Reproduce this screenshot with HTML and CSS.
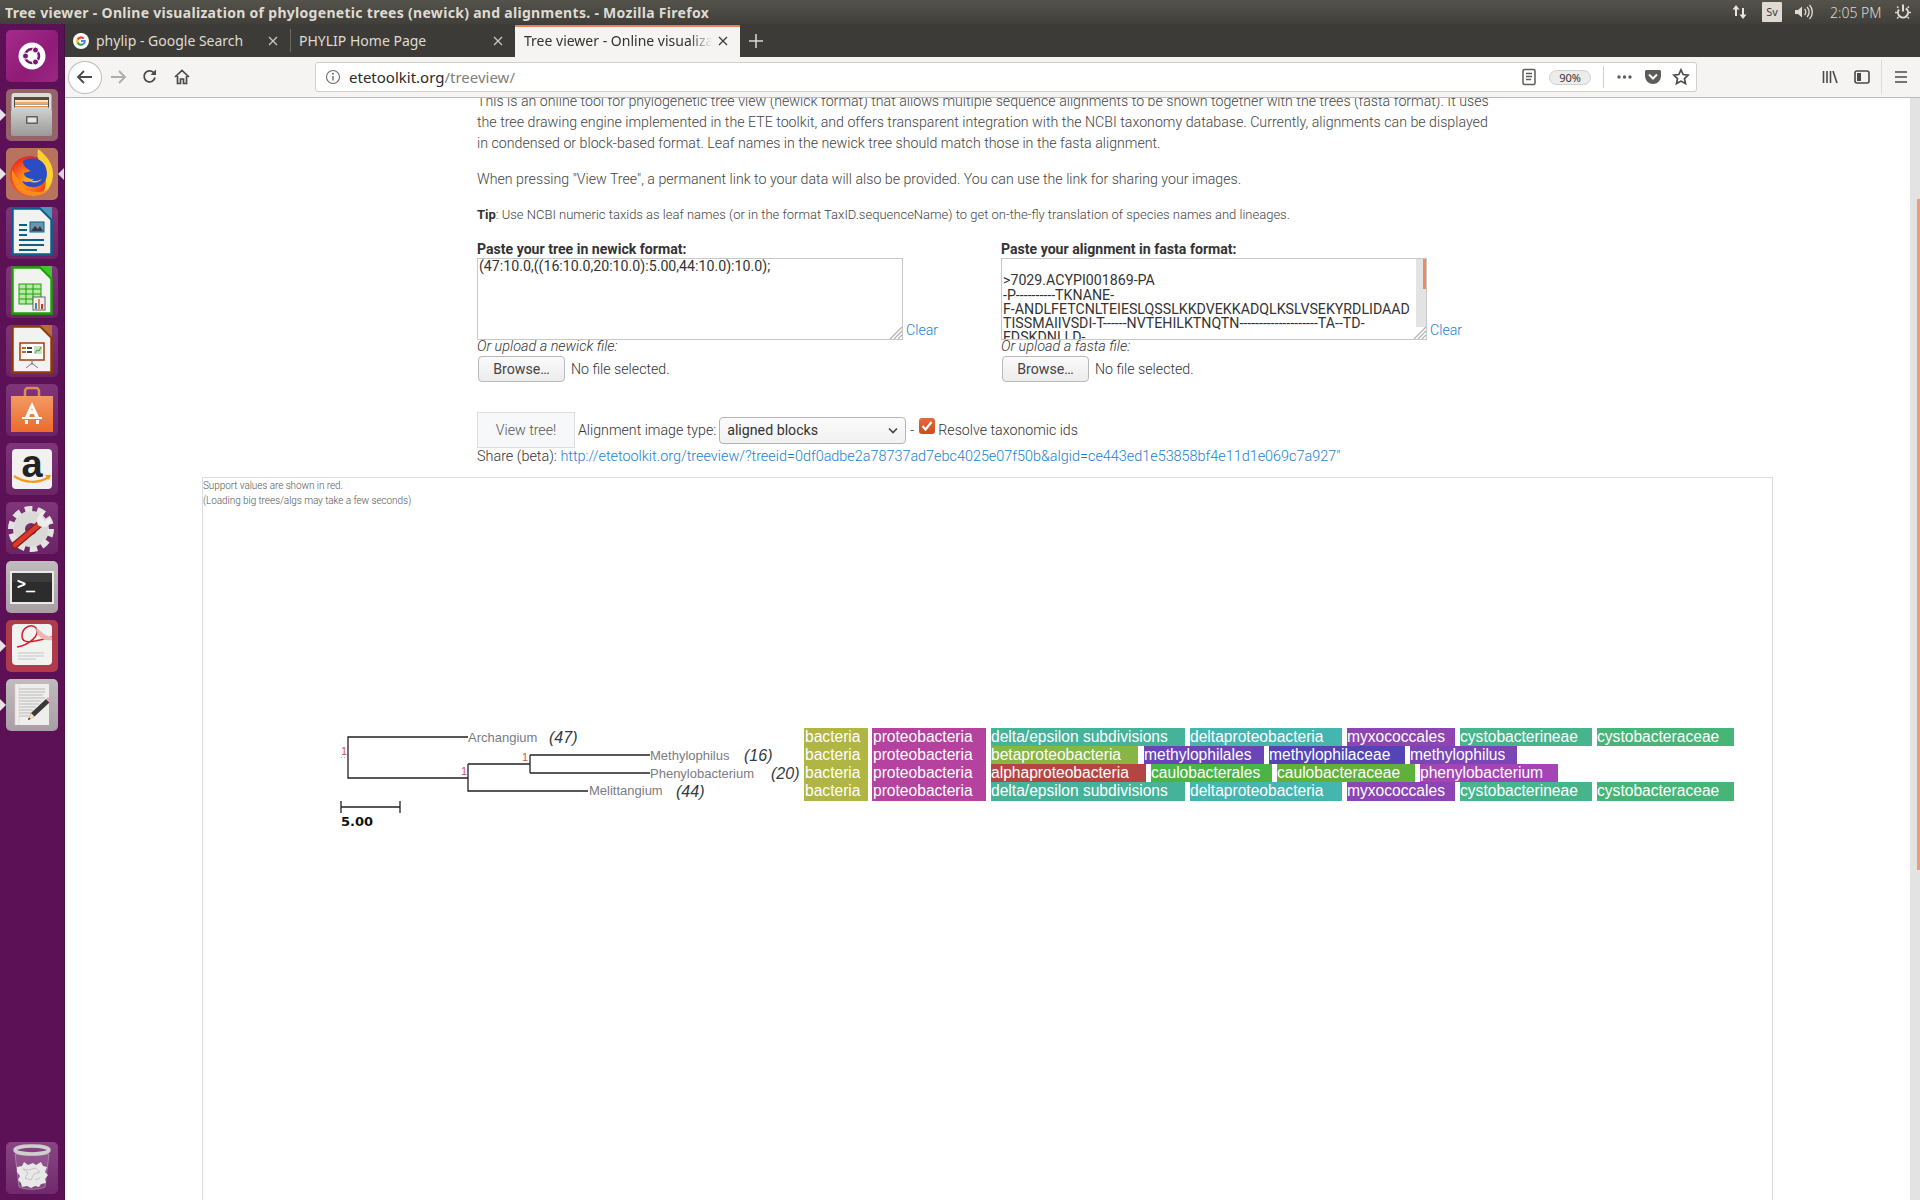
FILE: index.html
```html
<!DOCTYPE html>
<html lang="en">
<head>
<meta charset="utf-8">
<title>Tree viewer</title>
<link rel="stylesheet" href="styles.css">
</head>
<body>
<header class="topbar">
  <div class="wintitle">Tree viewer - Online visualization of phylogenetic trees (newick) and alignments. - Mozilla Firefox</div>
  <div class="tray">
    <svg class="tray-net" width="18" height="18" viewBox="0 0 18 18"><path d="M5 2 1.500 6.500H4V13h2V6.500h2.500zM12 16l3.500-4.500H13V5h-2v6.500H8.500z" fill="#e8e5de"/></svg>
    <span class="tray-kb">Sv</span>
    <svg class="tray-vol" width="22" height="18" viewBox="0 0 22 18"><path d="M2 7v4h3l4 3.500v-11L5 7z" fill="#dfdbd2"/><path d="M11.500 6a4 4 0 0 1 0 6M14 4a7 7 0 0 1 0 10M16.500 2a10 10 0 0 1 0 14" fill="none" stroke="#dfdbd2" stroke-width="1.400"/></svg>
    <span class="tray-time">2:05 PM</span>
    <svg class="tray-power" width="18" height="18" viewBox="0 0 18 18"><circle cx="9" cy="9.500" r="5" fill="none" stroke="#dfdbd2" stroke-width="2" stroke-dasharray="23 8.500" transform="rotate(-55 9 9.500)"/><path d="M9 1.500v7" stroke="#dfdbd2" stroke-width="2"/><path d="M1 9.500h2M15 9.500h2M3 15.500l1.500-1.500M15 15.500L13.500 14M3 3.500l1.500 1.500M15 3.500L13.500 5" stroke="#dfdbd2" stroke-width="1.300"/></svg>
  </div>
</header>

<div class="desktop">
  <nav class="launcher">
    <div class="tile t-ubuntu">
      <svg viewBox="0 0 52 52"><circle cx="26" cy="26" r="13.500" fill="#fff"/><circle cx="26" cy="26" r="7" fill="none" stroke="#7b1a6a" stroke-width="2.600"/><circle cx="19.500" cy="26" r="3" fill="#7b1a6a" stroke="#fff"/><circle cx="29.500" cy="20" r="3" fill="#7b1a6a" stroke="#fff"/><circle cx="29.500" cy="32" r="3" fill="#7b1a6a" stroke="#fff"/></svg>
    </div>
    <div class="tile t-files run">
      <svg viewBox="0 0 52 52"><defs><linearGradient id="cab" x1="0" y1="0" x2="0" y2="1"><stop offset="0" stop-color="#d2d2d0"/><stop offset="1" stop-color="#9a9a98"/></linearGradient></defs><rect x="5.500" y="4" width="40" height="40" rx="3" fill="#dcdbd9"/><rect x="8" y="8" width="35" height="14" fill="#4d4b48"/><rect x="9" y="11" width="33" height="2" fill="#fbe4c4"/><rect x="9" y="13" width="33" height="2" fill="#f0a860"/><rect x="9" y="15.500" width="33" height="1.500" fill="#fff"/><rect x="9" y="17" width="33" height="5" fill="#e88b3e"/><path d="M5 22l4-4h33l4 4v23a2 2 0 0 1-2 2H7a2 2 0 0 1-2-2z" fill="url(#cab)"/><rect x="20" y="27" width="12" height="8" rx="1" fill="#5f5f5d"/><rect x="21.500" y="28.500" width="9" height="5" fill="#e4e4e2"/></svg>
    </div>
    <div class="tile t-firefox run run-right">
      <svg viewBox="0 0 52 52"><defs><radialGradient id="ff" cx=".45" cy=".6" r=".6"><stop offset="0" stop-color="#ffb11f"/><stop offset=".6" stop-color="#f9591d"/><stop offset="1" stop-color="#e5251f"/></radialGradient></defs><circle cx="24" cy="28" r="20" fill="url(#ff)"/><path d="M32 1c8 6 15 14 15 25 0 9-4 16-10 20 3-7 4-16 1-23-3-7-8-11-6-22z" fill="#ffd02e"/><path d="M17 13c8-5 20-3 23 7 3 9-1 17-10 19-7 1-12-2-14-6 5 2 10 1 12-2-5 0-10-2-10-6 2-1 5-1 7-2-4-2-8-5-8-10z" fill="#2a4cc4"/><path d="M6 22c-1 10 3 20 12 24 9 4 20 2 26-6-8 6-20 5-26-1-5-5-8-11-12-17z" fill="#ff8a1c"/><path d="M22 32c5 2 11 1 14-1-3 4-9 5-14 1z" fill="#ffbe2e"/></svg>
    </div>
    <div class="tile t-purple">
      <svg viewBox="0 0 52 52"><path d="M6.500 1.500h28l11 11v35h-39z" fill="#f2f2f0" stroke="#0e5f88" stroke-width="2.500"/><path d="M34 0h12v12z" fill="#4f98bd"/><rect x="13" y="17" width="8" height="2" fill="#0e5f88"/><rect x="13" y="22" width="8" height="2" fill="#0e5f88"/><rect x="13" y="27" width="8" height="2" fill="#0e5f88"/><rect x="24" y="15" width="14" height="10" fill="#6a96b3" stroke="#0e5f88"/><path d="M25 24l4-5 3 3 2-3 3 5z" fill="#38393b"/><rect x="13" y="32" width="25" height="2" fill="#0e5f88"/><rect x="13" y="37" width="25" height="2" fill="#0e5f88"/><rect x="13" y="42" width="18" height="2" fill="#0e5f88"/></svg>
    </div>
    <div class="tile t-purple">
      <svg viewBox="0 0 52 52"><path d="M6.500 1.500h28l11 11v35h-39z" fill="#f2f2f0" stroke="#18a303" stroke-width="2.500"/><path d="M34 0h12v12z" fill="#43c330"/><rect x="13" y="18" width="22" height="20" fill="#b9e8a8" stroke="#18a303"/><path d="M13 23h22M13 28h22M13 33h22M20 18v20M27 18v20" stroke="#18a303"/><rect x="27" y="31" width="12" height="13" fill="#eee" stroke="#666"/><rect x="29" y="37" width="2" height="6" fill="#3c86c6"/><rect x="32" y="33" width="2" height="10" fill="#e88b3e"/><rect x="35" y="38" width="2" height="5" fill="#c33"/></svg>
    </div>
    <div class="tile t-purple">
      <svg viewBox="0 0 52 52"><path d="M6.500 1.500h28l11 11v35h-39z" fill="#f2f2f0" stroke="#8f3a0a" stroke-width="2.500"/><path d="M34 0h12v12z" fill="#b86a3c"/><rect x="14" y="18" width="24" height="17" fill="#fff" stroke="#a33e03" stroke-width="1.500"/><rect x="16" y="22" width="4" height="2" fill="#c8602a"/><rect x="21" y="22" width="5" height="2" fill="#444"/><rect x="16" y="26" width="4" height="2" fill="#c8602a"/><rect x="21" y="26" width="5" height="2" fill="#444"/><rect x="28" y="21" width="8" height="8" fill="#cfe0c0"/><path d="M29 28l2-3 2 1 2-4" stroke="#3a9a2a" fill="none"/><path d="M26 35v5M26 38l-6 5M26 38l6 5" stroke="#777" fill="none"/></svg>
    </div>
    <div class="tile t-purple">
      <svg viewBox="0 0 52 52"><defs><linearGradient id="bag" x1="0" y1="0" x2="0" y2="1"><stop offset="0" stop-color="#f29a62"/><stop offset="1" stop-color="#ee6a2c"/></linearGradient></defs><path d="M19 13V7a3 3 0 0 1 3-3h8a3 3 0 0 1 3 3v6" fill="none" stroke="#dd8a5d" stroke-width="2.500"/><path d="M5 12h42v36H5z" fill="url(#bag)"/><path d="M26 18l-7 15h4l1.200-3h3.600l1.200 3h4zM25.200 26.500 26 24l.8 2.500z" fill="#fff" fill-rule="evenodd"/><rect x="16" y="33" width="20" height="2" fill="#fff"/><rect x="19" y="36" width="3" height="4" fill="#fff"/><rect x="30" y="36" width="3" height="4" fill="#fff"/></svg>
    </div>
    <div class="tile t-purple">
      <svg viewBox="0 0 52 52"><rect x="6" y="6" width="40" height="40" rx="4" fill="#f1f1ef"/><text x="26" y="34" class="amz">a</text><path d="M8 33c10 7 24 8 35 1" fill="none" stroke="#f39a1e" stroke-width="2.200"/><path d="M39 32l6 0-2 5z" fill="#f39a1e"/></svg>
    </div>
    <div class="tile t-purple">
      <svg viewBox="0 0 52 52"><circle cx="25" cy="27" r="12" fill="none" stroke="#d9d9d7" stroke-width="12"/><circle cx="25" cy="27" r="20" fill="none" stroke="#e2e2e0" stroke-width="6" stroke-dasharray="7.500 5"/><path d="M9 43l26-22" stroke="#8c1c16" stroke-width="7" stroke-linecap="round"/><path d="M9 43l26-22" stroke="#d93a2b" stroke-width="4.500" stroke-linecap="round"/><path d="M32 23c-3-6 1-13 8-14l-4 6 3 4 6-3c1 7-6 12-13 7z" fill="#ededeb"/></svg>
    </div>
    <div class="tile t-gray">
      <svg viewBox="0 0 52 52"><rect x="4" y="10" width="44" height="33" fill="#e9e9e7"/><rect x="6" y="12" width="40" height="29" fill="#2c2c2c"/><rect x="6" y="12" width="40" height="9" fill="#3c3c3c"/><text x="11" y="28" class="term">&gt;_</text></svg>
    </div>
    <div class="tile t-red run">
      <svg viewBox="0 0 52 52"><rect x="6" y="4" width="40" height="41" rx="4" fill="#f2f2f0"/><path d="M11 27c12-2 24-12 19-19-4-5-14-1-14 8 0 8 8 7 30 1" fill="none" stroke="#d0232d" stroke-width="1.500"/><path d="M30 8c7 4 8 8 16 9l0 3c-8 1-14-1-16-12z" fill="#eeb4b4"/><path d="M12 33h26M12 36h26M12 39h18" stroke="#c4c4c4"/></svg>
    </div>
    <div class="tile t-gray run">
      <svg viewBox="0 0 52 52"><rect x="9" y="5" width="34" height="41" fill="#eeeeec"/><path d="M13 10h26M13 13h26M13 16h24M13 19h26M13 22h22M13 25h20M13 28h17M13 31h14M13 34h12M13 37h10" stroke="#b8b8b8"/><path d="M9 5v41M13 5v41" stroke="#e8c8c8" stroke-width=".6"/><path d="M22 41l3-7 15-14 3.500 3.500-15 14z" fill="#3a3a3a"/><path d="M40 20l2-2 3.500 3.500-2 2z" fill="#e79bc0"/><path d="M22 41l3-7 3.500 3.500z" fill="#f3e6a0"/><path d="M22 41l1-2.500 1.500 1.500z" fill="#222"/></svg>
    </div>
    <div class="tile t-trash">
      <svg viewBox="0 0 52 52"><path d="M9 12l4 33c6 3 20 3 26 0l4-33z" fill="#ffffff" fill-opacity=".12" stroke="#d8d0d8" stroke-opacity=".4"/><path d="M11 25l5-1 2-4 4 3 5-2 3 2 5-3 2 4 4 1-2 5 3 3-3 4 1 4-5 1-2 3-4-1-4 2-4-2-5 1-1-4-3-3 2-4-3-4z" fill="#e8e8e8"/><path d="M17 27l5 4-3 5 6 2 3-6 6-2-5-4-6 2zM29 38l5-2" fill="none" stroke="#c4c4c4"/><ellipse cx="26" cy="8" rx="17" ry="4" fill="none" stroke="#cfcfcd" stroke-width="3.500"/></svg>
    </div>
  </nav>

  <main class="browser">
    <div class="tabbar">
      <div class="tab">
        <svg class="favicon" width="16" height="16" viewBox="0 0 16 16"><circle cx="8" cy="8" r="8" fill="#fff"/><path d="M8 3.200A4.800 4.800 0 0 0 3.700 5.800L5.600 7.300A2.800 2.800 0 0 1 10 6.200L11.500 4.700A4.800 4.800 0 0 0 8 3.200z" fill="#ea4335"/><path d="M3.700 5.800a4.800 4.800 0 0 0 0 4.400l1.900-1.500a2.800 2.800 0 0 1 0-1.400z" fill="#fbbc05"/><path d="M3.700 10.200A4.800 4.800 0 0 0 11.200 11.600L9.500 10.300A2.800 2.800 0 0 1 5.600 8.700z" fill="#34a853"/><path d="M12.700 7H8v2h2.700a2.400 2.400 0 0 1-1.200 1.300l1.700 1.300A4.800 4.800 0 0 0 12.700 7z" fill="#4285f4"/></svg>
        <span class="tab-title">phylip - Google Search</span>
        <svg class="tab-x" width="12" height="12" viewBox="0 0 12 12"><path d="M2 2l8 8M10 2l-8 8" stroke="#c9c7c2" stroke-width="1.300"/></svg>
      </div>
      <div class="tab tab-sep">
        <span class="tab-title">PHYLIP Home Page</span>
        <svg class="tab-x" width="12" height="12" viewBox="0 0 12 12"><path d="M2 2l8 8M10 2l-8 8" stroke="#c9c7c2" stroke-width="1.300"/></svg>
      </div>
      <div class="tab tab-active">
        <span class="tab-title tab-fade">Tree viewer - Online visualization of phylogenetic trees</span>
        <svg class="tab-x" width="12" height="12" viewBox="0 0 12 12"><path d="M2 2l8 8M10 2l-8 8" stroke="#3c3b37" stroke-width="1.300"/></svg>
      </div>
      <svg class="tab-new" width="14" height="14" viewBox="0 0 14 14"><path d="M7 0v14M0 7h14" stroke="#dcdad5" stroke-width="1.500"/></svg>
    </div>

    <div class="navbar">
      <div class="nav-back"><svg width="18" height="18" viewBox="0 0 18 18"><path d="M8 3 2 9l6 6M2 9h14" fill="none" stroke="#4a4a48" stroke-width="1.800"/></svg></div>
      <div class="nav-btn"><svg width="18" height="18" viewBox="0 0 18 18"><path d="M10 3l6 6-6 6M16 9H2" fill="none" stroke="#adadab" stroke-width="1.800"/></svg></div>
      <div class="nav-btn"><svg width="18" height="18" viewBox="0 0 18 18"><path d="M14 9.500A5.500 5.500 0 1 1 12.500 4.500" fill="none" stroke="#4a4a48" stroke-width="1.800"/><path d="M15 1.500V7H9.500z" fill="#4a4a48"/></svg></div>
      <div class="nav-btn"><svg width="18" height="18" viewBox="0 0 18 18"><path d="M2 9l7-6.500L16 9M4.500 8v7.500h3V11h3v4.500h3V8" fill="none" stroke="#4a4a48" stroke-width="1.700"/></svg></div>
      <div class="urlbar">
        <svg class="url-info" width="16" height="16" viewBox="0 0 16 16"><circle cx="8" cy="8" r="6.500" fill="none" stroke="#6b6b69" stroke-width="1.100"/><path d="M8 7v4.500" stroke="#6b6b69" stroke-width="1.400"/><circle cx="8" cy="4.800" r="1" fill="#6b6b69"/></svg>
        <span class="url-text">etetoolkit.org<span class="url-path">/treeview/</span></span>
        <span class="url-spacer"></span>
        <svg class="url-reader" width="16" height="18" viewBox="0 0 16 18"><rect x="2" y="1.500" width="12" height="15" rx="1.500" fill="none" stroke="#5c5c5a" stroke-width="1.500"/><path d="M5 5.500h6M5 8.500h6M5 11.500h5" stroke="#5c5c5a" stroke-width="1.300"/></svg>
        <span class="url-zoom">90%</span>
        <span class="url-sep"></span>
        <svg class="url-dots" width="20" height="6" viewBox="0 0 20 6"><circle cx="5" cy="3" r="1.700" fill="#5c5c5a"/><circle cx="10.500" cy="3" r="1.700" fill="#5c5c5a"/><circle cx="16" cy="3" r="1.700" fill="#5c5c5a"/></svg>
        <svg class="url-pocket" width="18" height="16" viewBox="0 0 18 16"><path d="M1 2.500A1.500 1.500 0 0 1 2.500 1h13A1.500 1.500 0 0 1 17 2.500V7A8 8 0 0 1 1 7z" fill="#5c5c5a"/><path d="M5 5.500l4 4 4-4" fill="none" stroke="#f8f8f6" stroke-width="2"/></svg>
        <svg class="url-star" width="18" height="18" viewBox="0 0 18 18"><path d="M9 1.800l2.200 4.700 5 .6-3.700 3.500 1 5L9 13.100l-4.500 2.500 1-5L1.800 7.100l5-.6z" fill="none" stroke="#4a4a48" stroke-width="1.700"/></svg>
      </div>
      <div class="nav-btn nav-lib"><svg width="18" height="18" viewBox="0 0 18 18"><path d="M2.500 3v12M6 3v12M9.500 3v12M12 3l4 12" stroke="#4a4a48" stroke-width="1.600" fill="none"/></svg></div>
      <div class="nav-btn"><svg width="18" height="18" viewBox="0 0 18 18"><rect x="2" y="3" width="14" height="12" rx="2" fill="none" stroke="#4a4a48" stroke-width="1.600"/><rect x="4" y="5" width="4" height="8" fill="#4a4a48"/></svg></div>
      <span class="nav-sep"></span>
      <div class="nav-btn"><svg width="18" height="18" viewBox="0 0 18 18"><path d="M3 4h12M3 9h12M3 14h12" stroke="#4a4a48" stroke-width="1.700"/></svg></div>
    </div>

    <div class="page">
      <div class="content">
        <div class="column">
          <p class="para">This is an online tool for phylogenetic tree view (newick format) that allows multiple sequence alignments to be shown together with the trees (fasta format). It uses<br>the tree drawing engine implemented in the ETE toolkit, and offers transparent integration with the NCBI taxonomy database. Currently, alignments can be displayed<br>in condensed or block-based format. Leaf names in the newick tree should match those in the fasta alignment.</p>
          <p class="para para-2">When pressing "View Tree", a permanent link to your data will also be provided. You can use the link for sharing your images.</p>
          <p class="tip"><b>Tip</b>: Use NCBI numeric taxids as leaf names (or in the format TaxID.sequenceName) to get on-the-fly translation of species names and lineages.</p>

          <div class="inputs">
            <div class="input-col">
              <label class="field-label">Paste your tree in newick format:</label>
              <div class="area-row">
                <div class="area-wrap">
                  <textarea class="area" readonly>(47:10.0,((16:10.0,20:10.0):5.00,44:10.0):10.0);</textarea>
                  <svg class="grip" width="14" height="14" viewBox="0 0 14 14"><path d="M13 1 1 13M13 5 5 13M13 9l-4 4" stroke="#b4b4b4" stroke-width="1.200"/></svg>
                </div>
                <a class="clear">Clear</a>
              </div>
              <div class="upload-label">Or upload a newick file:</div>
              <div class="file-row"><button class="browse">Browse…</button><span class="nofile">No file selected.</span></div>
            </div>
            <div class="input-col">
              <label class="field-label">Paste your alignment in fasta format:</label>
              <div class="area-row">
                <div class="area-wrap">
                  <textarea class="area" readonly>

&gt;7029.ACYPI001869-PA
-P----------TKNANE-
F-ANDLFETCNLTEIESLQSSLKKDVEKKADQLKSLVSEKYRDLIDAAD
TISSMAIIVSDI-T------NVTEHILKTNQTN--------------------TA--TD-
FDSKDNLLD-</textarea>
                  <div class="area-scroll"><div class="area-thumb"></div></div>
                  <svg class="grip" width="14" height="14" viewBox="0 0 14 14"><path d="M13 1 1 13M13 5 5 13M13 9l-4 4" stroke="#b4b4b4" stroke-width="1.200"/></svg>
                </div>
                <a class="clear">Clear</a>
              </div>
              <div class="upload-label">Or upload a fasta file:</div>
              <div class="file-row"><button class="browse">Browse…</button><span class="nofile">No file selected.</span></div>
            </div>
          </div>

          <div class="actions">
            <button class="view-btn">View tree!</button>
            <span class="act-label">Alignment image type:</span>
            <div class="select-wrap">
              <select class="select"><option>aligned blocks</option></select>
              <svg class="chev" width="12" height="8" viewBox="0 0 12 8"><path d="M2 1.500 6 5.500l4-4" fill="none" stroke="#444" stroke-width="1.600"/></svg>
            </div>
            <span class="dash">-</span>
            <span class="check"><svg width="16" height="16" viewBox="0 0 16 16"><path d="M3.500 8l3 3.500L12.500 4" fill="none" stroke="#fff" stroke-width="2.200"/></svg></span>
            <span class="act-label">Resolve taxonomic ids</span>
          </div>
          <div class="share">Share (beta): <a class="share-link">http://etetoolkit.org/treeview/?treeid=0df0adbe2a78737ad7ebc4025e07f50b&amp;algid=ce443ed1e53858bf4e11d1e069c7a927"</a></div>
        </div>

        <section class="panel">
          <div class="panel-note">Support values are shown in red.<br>(Loading big trees/algs may take a few seconds)</div>
          <svg class="tree" width="700" height="420" viewBox="0 0 700 420">
            <g transform="translate(-203 -478)">
              <path class="edge" d="M468 737H348V778H468M468 764V791H588M468 764H530M530 755V773M530 755H650M530 773H650"/>
              <path class="edge" d="M341 807H400M341 801V813M400 801V813"/>
              <text class="leaf" x="468" y="742">Archangium</text>
              <text class="num" x="549" y="743">(47)</text>
              <text class="leaf" x="650" y="760">Methylophilus</text>
              <text class="num" x="744" y="761">(16)</text>
              <text class="leaf" x="650" y="778">Phenylobacterium</text>
              <text class="num" x="771" y="779">(20)</text>
              <text class="leaf" x="589" y="795">Melittangium</text>
              <text class="num" x="676" y="797">(44)</text>
              <text class="sup" x="341" y="755">1</text>
              <path class="sup-dots" d="M341 757.500h6"/>
              <text class="sup" x="461" y="775">1</text>
              <text class="sup" x="522" y="761">1</text>
              <text class="scale" x="341" y="826">5.00</text>
            </g>
          </svg>
          <div class="align">
            <div class="arow">
              <span class="blk c-bac" style="width:64px">bacteria</span><span class="blk c-pro" style="width:114px;margin-left:4px">proteobacteria</span><span class="blk c-dee" style="width:194px;margin-left:5px">delta/epsilon subdivisions</span><span class="blk c-del" style="width:152px;margin-left:5px">deltaproteobacteria</span><span class="blk c-myx" style="width:108px;margin-left:5px">myxococcales</span><span class="blk c-cyi" style="width:132px;margin-left:5px">cystobacterineae</span><span class="blk c-cya" style="width:137px;margin-left:5px">cystobacteraceae</span>
            </div>
            <div class="arow">
              <span class="blk c-bac" style="width:64px">bacteria</span><span class="blk c-pro" style="width:114px;margin-left:4px">proteobacteria</span><span class="blk c-bet" style="width:147px;margin-left:5px">betaproteobacteria</span><span class="blk c-mle" style="width:120px;margin-left:6px">methylophilales</span><span class="blk c-mce" style="width:136px;margin-left:5px">methylophilaceae</span><span class="blk c-mus" style="width:107px;margin-left:5px">methylophilus</span>
            </div>
            <div class="arow">
              <span class="blk c-bac" style="width:64px">bacteria</span><span class="blk c-pro" style="width:114px;margin-left:4px">proteobacteria</span><span class="blk c-alp" style="width:155px;margin-left:5px">alphaproteobacteria</span><span class="blk c-cle" style="width:121px;margin-left:5px">caulobacterales</span><span class="blk c-cce" style="width:138px;margin-left:5px">caulobacteraceae</span><span class="blk c-phe" style="width:138px;margin-left:5px">phenylobacterium</span>
            </div>
            <div class="arow">
              <span class="blk c-bac" style="width:64px">bacteria</span><span class="blk c-pro" style="width:114px;margin-left:4px">proteobacteria</span><span class="blk c-dee" style="width:194px;margin-left:5px">delta/epsilon subdivisions</span><span class="blk c-del" style="width:152px;margin-left:5px">deltaproteobacteria</span><span class="blk c-myx" style="width:108px;margin-left:5px">myxococcales</span><span class="blk c-cyi" style="width:132px;margin-left:5px">cystobacterineae</span><span class="blk c-cya" style="width:137px;margin-left:5px">cystobacteraceae</span>
            </div>
          </div>
        </section>
      </div>
      <div class="scrollbar"><div class="scroll-thumb"></div></div>
    </div>
  </main>
</div>
</body>
</html>
```
FILE: styles.css
```css
* { box-sizing: border-box; }
html, body { margin: 0; height: 100%; overflow: hidden; }
body { display: flex; flex-direction: column; width: 1920px; height: 1200px; font-family: "Noto Sans", sans-serif; background: #fff; }

/* top panel */
.topbar { height: 24px; flex: none; display: flex; align-items: center; justify-content: space-between; background: linear-gradient(#54524b, #403f3a); color: #dfdbd2; }
.wintitle { margin-left: 5px; font-size: 14px; letter-spacing: .3px; font-weight: 700; white-space: nowrap; }
.tray { display: flex; align-items: center; margin-right: 8px; }
.tray-kb { width: 20px; height: 20px; margin-left: 13px; background: #dfdbd2; color: #3c3b37; border-radius: 1px; font-size: 11px; line-height: 20px; text-align: center; }
.tray-vol { margin-left: 11px; }
.tray-time { margin-left: 15px; font-size: 14px; width: 53px; white-space: nowrap; font-weight: 300; }
.tray-power { margin-left: 11px; }

.desktop { flex: 1; display: flex; min-height: 0; }

/* launcher */
.launcher { width: 65px; flex: none; display: flex; flex-direction: column; gap: 7px; padding: 6px 0 6px 6px; background: #5c1056; border-right: 1px solid #4a0d45; }
.tile { position: relative; width: 52px; height: 52px; flex: none; border-radius: 5px; }
.tile svg { display: block; width: 52px; height: 52px; }
.t-ubuntu { background: linear-gradient(135deg, #a52b8c, #8f1b76 60%, #9b2a84); }
.t-files { background: #96636a; }
.t-firefox { background: #b8735f; }
.t-purple { background: linear-gradient(#7f3579, #6b2466); }
.t-gray { background: linear-gradient(#c0bbbd, #a89fa4); }
.t-red { background: #ae3c4b; }
.t-trash { margin-top: auto; background: linear-gradient(#8a4584, #702a6b); }
.run::before { content: ""; position: absolute; left: -6px; top: 20px; border-left: 6px solid #e8e4e6; border-top: 6px solid transparent; border-bottom: 6px solid transparent; }
.run-right::after { content: ""; position: absolute; right: -6px; top: 20px; border-right: 6px solid #d9d5d8; border-top: 6px solid transparent; border-bottom: 6px solid transparent; }
.amz { font-family: "Liberation Sans", sans-serif; font-size: 38px; font-weight: 700; fill: #222; text-anchor: middle; }
.term { font-family: "DejaVu Sans Mono", monospace; font-size: 15px; font-weight: 700; fill: #fff; }

/* browser */
.browser { flex: 1; min-width: 0; display: flex; flex-direction: column; }
.tabbar { height: 33px; flex: none; display: flex; align-items: stretch; background: #3c3b37; }
.tab { position: relative; width: 225px; flex: none; display: flex; align-items: center; padding: 0 11px 0 10px; color: #dfdbd2; font-size: 14px; }
.tab-sep::before { content: ""; position: absolute; left: 0; top: 5px; bottom: 5px; width: 1px; background: #6c6a64; }
.tab-sep { padding-left: 9px; }
.favicon { margin: 0 7px 0 -2px; flex: none; }
.tab-title { flex: 1; min-width: 0; white-space: nowrap; overflow: hidden; }
.tab-x { flex: none; }
.tab-active { background: #f5f4f2; color: #33322e; border-top: 2px solid #ef7f55; margin-top: 1px; padding: 0 11px 3px 9px; }
.tab-fade { -webkit-mask-image: linear-gradient(90deg, #000 88%, transparent); mask-image: linear-gradient(90deg, #000 88%, transparent); margin-right: 5px; }
.tab-new { align-self: center; margin-left: 9px; }

.navbar { height: 41px; flex: none; display: flex; align-items: center; padding-left: 3px; background: #f5f4f2; border-bottom: 1px solid #bdbcba; }
.nav-back { width: 34px; height: 33px; flex: none; display: flex; align-items: center; justify-content: center; background: #fff; border: 1px solid #bbb; border-radius: 50%; }
.nav-btn { width: 32px; height: 32px; flex: none; display: flex; align-items: center; justify-content: center; }
.urlbar { width: 1382px; height: 30px; flex: none; margin-left: 117px; display: flex; align-items: center; padding: 0 6px 0 9px; background: #fff; border: 1px solid #d0cfcc; border-radius: 3px; }
.url-info { flex: none; }
.url-text { margin-left: 8px; font-size: 15px; color: #2a2a28; white-space: nowrap; }
.url-path { color: #7f7f7c; }
.url-spacer { flex: 1; }
.url-zoom { width: 42px; height: 15px; margin-left: 12px; background: #ececea; border: 1px solid #cfcfcc; border-radius: 8px; font-size: 11px; line-height: 13px; text-align: center; color: #333; }
.url-sep { width: 1px; height: 22px; margin-left: 12px; background: #cfcfcc; }
.url-dots { margin-left: 10px; }
.url-pocket { margin-left: 10px; }
.url-star { margin-left: 10px; }
.nav-lib { margin-left: 117px; }
.nav-sep { width: 1px; height: 34px; margin: 0 3px; background: #dcdbd8; }

/* page */
.page { flex: 1; min-height: 0; display: flex; }
.content { flex: 1; min-width: 0; overflow: hidden; font-family: Roboto, sans-serif; color: #555; background: #fff; }
.column { margin-left: 412px; margin-top: -7px; }
.para { margin: 0; font-size: 14.200px; line-height: 21px; font-weight: 300; color: #444; white-space: nowrap; }
.para-2 { margin-top: 15px; }
.tip { margin: 14px 0 0; font-size: 13px; line-height: 21px; font-weight: 300; color: #444; white-space: nowrap; }
.tip b { font-weight: 700; color: #333; }

.inputs { display: flex; margin-top: 15px; }
.input-col { width: 524px; flex: none; }
.field-label { display: block; height: 18px; font-size: 14.100px; line-height: 19px; font-weight: 700; color: #333; white-space: nowrap; }
.area-row { display: flex; align-items: flex-end; }
.area-wrap { position: relative; width: 426px; height: 82px; flex: none; }
.area-wrap .grip { position: absolute; right: 0; bottom: 0; }
.area { display: block; width: 100%; height: 100%; margin: 0; padding: 0 1px; resize: none; overflow: hidden; white-space: pre; border: 1px solid #c8c8c8; background: #fff; font-family: Roboto, sans-serif; font-size: 14.200px; line-height: 14.300px; color: #333; outline: 0; }
.area-scroll { position: absolute; top: 1px; right: 1px; width: 10px; height: 68px; background: #e3e3e3; }
.area-thumb { width: 3px; height: 30px; margin-left: 7px; background: #ef8a63; }
.clear { margin: 0 0 1px 3px; font-size: 14.200px; line-height: 17px; font-weight: 300; color: #1b7fd0; }
.upload-label { height: 14px; font-size: 14.400px; line-height: 14px; font-style: italic; font-weight: 300; color: #333; white-space: nowrap; }
.file-row { display: flex; align-items: center; height: 26px; margin: 2px 0 0 1px; }
.browse { width: 87px; height: 26px; padding: 0; background: linear-gradient(#fafafa, #ececec); border: 1px solid #b9b9b9; border-radius: 4px; font-family: Roboto, sans-serif; font-size: 14.200px; color: #444; }
.nofile { margin-left: 6px; font-size: 14.200px; font-weight: 300; color: #333; white-space: nowrap; }

.actions { display: flex; align-items: center; height: 36px; margin-top: 30px; font-size: 14.200px; font-weight: 300; color: #333; white-space: nowrap; }
.view-btn { width: 98px; height: 36px; padding: 0; background: #f6f8fa; border: 1px solid #ddd; font-family: Roboto, sans-serif; font-size: 14.200px; font-weight: 300; color: #555; }
.act-label { margin-left: 3px; }
.select-wrap { position: relative; width: 187px; height: 27px; margin-left: 3px; flex: none; }
.select { width: 100%; height: 100%; padding: 0 7px; appearance: none; -webkit-appearance: none; background: linear-gradient(#fbfbfb, #f1f1f1); border: 1px solid #b4b4b4; border-radius: 4px; font-family: Roboto, sans-serif; font-size: 14.200px; color: #333; }
.chev { position: absolute; right: 7px; top: 10px; }
.dash { margin-left: 4px; }
.check { width: 16px; height: 16px; margin: 0 0 8px 5px; flex: none; background: linear-gradient(#e8683a, #c84e22); border-radius: 3px; }
.check svg { display: block; }
.share { height: 17px; font-size: 14.400px; line-height: 17px; font-weight: 300; color: #333; white-space: nowrap; }
.share-link { color: #1b7fd0; }

.panel { position: relative; width: 1571px; height: 800px; margin: 12px 0 0 137px; border: 1px solid #ddd; border-bottom: 0; }
.panel-note { font-size: 10px; line-height: 15px; font-weight: 300; color: #555; letter-spacing: -.08px; white-space: nowrap; }
.tree { position: absolute; left: 0; top: 0; }
.edge { fill: none; stroke: #222; stroke-width: 1.300; }
.sup-dots { stroke: #999; stroke-dasharray: 1 2; }
.leaf { font-family: "Liberation Sans", sans-serif; font-size: 13px; fill: #7b7b84; }
.num { font-family: "Liberation Sans", sans-serif; font-size: 16px; font-style: italic; fill: #333a44; }
.sup { font-family: "Liberation Sans", sans-serif; font-size: 11px; fill: #d9534f; }
.scale { font-family: "DejaVu Sans", sans-serif; font-size: 13px; font-weight: 700; fill: #111; }

.align { position: absolute; left: 601px; top: 250px; font-family: "Liberation Sans", sans-serif; }
.arow { display: flex; height: 18px; }
.blk { flex: none; height: 18px; font-size: 15.600px; line-height: 18px; color: #fff; white-space: nowrap; overflow: hidden; }
.arow:last-child, .arow:last-child .blk { height: 19px; }
.c-bac { background: #b0b544; padding-left: 1px; }
.c-pro { background: #b5429f; padding-left: 1px; }
.c-dee { background: #45b39a; }
.c-del { background: #45b5b0; }
.c-myx { background: #8d45b3; }
.c-cyi { background: #47b58b; }
.c-cya { background: #47b578; }
.c-bet { background: #88b545; }
.c-mle { background: #6a45b5; }
.c-mce { background: #5345b5; }
.c-mus { background: #7a45b5; }
.c-alp { background: #b54545; }
.c-cle { background: #4ab545; }
.c-cce { background: #60b03c; }
.c-phe { background: #a545b5; }

.scrollbar { width: 10px; flex: none; background: #e3e3e3; padding-top: 101px; }
.scroll-thumb { width: 3px; height: 671px; margin-left: 7px; background: #f29a74; }
```
